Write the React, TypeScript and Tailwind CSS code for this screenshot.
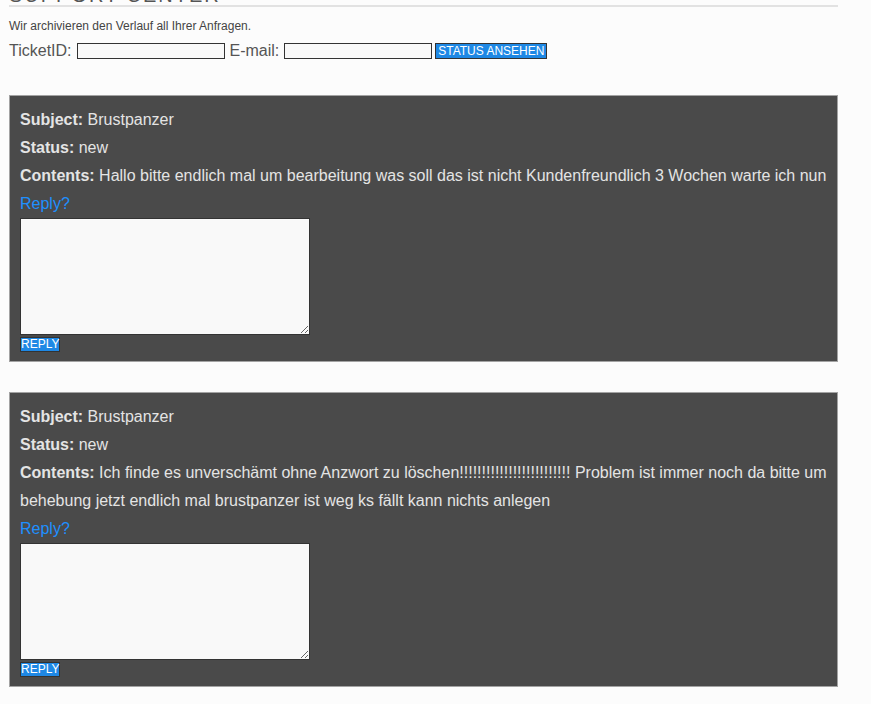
import React from "react";

type Ticket = {
  subject: string;
  status: string;
  contents: string;
};

const tickets: Ticket[] = [
  {
    subject: "Brustpanzer",
    status: "new",
    contents:
      "Hallo bitte endlich mal um bearbeitung was soll das ist nicht Kundenfreundlich 3 Wochen warte ich nun",
  },
  {
    subject: "Brustpanzer",
    status: "new",
    contents:
      "Ich finde es unverschämt ohne Anzwort zu löschen!!!!!!!!!!!!!!!!!!!!!!!!! Problem ist immer noch da bitte um behebung jetzt endlich mal brustpanzer ist weg ks fällt kann nichts anlegen",
  },
];

const TicketCard = ({ ticket }: { ticket: Ticket }) => {
  return (
    <div className="border border-[#a3a3a3] bg-[#4a4a4a] pb-[9px] pl-[10px] pr-[8px] pt-[10px] text-[16px] leading-[28px] text-[#e4e4e4]">
      <p>
        <b>Subject:</b> {ticket.subject}
      </p>
      <p>
        <b>Status:</b> {ticket.status}
      </p>
      <p>
        <b>Contents:</b> {ticket.contents}
      </p>
      <a href="#" className="block text-[#1e90ff]">
        Reply?
      </a>
      <textarea className="block h-[117px] w-[290px] border border-[#333] bg-[#f9f9f9] text-[13px] text-black outline-none" />
      <button className="mt-[2px] block border border-[#333] bg-[#1e88e5] px-0 text-[12px] leading-[13px] text-white">
        REPLY
      </button>
    </div>
  );
};

const App = () => {
  return (
    <div
      className="min-h-screen overflow-hidden bg-[#fcfcfc] px-[9px] pb-10"
      style={{ fontFamily: '"Liberation Sans", Arial, sans-serif' }}
    >
      <div className="w-[829px]">
        <h2 className="-mt-[15px] border-b-2 border-[#e2e2e2] text-[20px] leading-[20px] tracking-[2px] text-[#555]">
          SUPPORT CENTER
        </h2>

        <p className="mt-[12px] text-[12px] leading-[14px] text-[#444]">
          Wir archivieren den Verlauf all Ihrer Anfragen.
        </p>

        <form className="mt-[9px] flex h-[18px] items-center text-[16px] text-[#555]">
          <label>TicketID:</label>
          <input className="ml-[5px] h-[16px] w-[148px] border border-[#333] bg-[#f9f9f9] outline-none" />
          <label className="ml-[5px]">E-mail:</label>
          <input className="ml-[5px] h-[16px] w-[148px] border border-[#333] bg-[#f9f9f9] outline-none" />
          <button
            type="button"
            className="ml-[3px] h-[16px] w-[112px] border border-[#333] bg-[#1e88e5] text-[12px] leading-[13px] text-white"
          >
            STATUS ANSEHEN
          </button>
        </form>

        <div className="mt-[35px] flex flex-col gap-[30px]">
          {tickets.map((t, i) => (
            <TicketCard key={i} ticket={t} />
          ))}
        </div>
      </div>
    </div>
  );
};

export default App;
